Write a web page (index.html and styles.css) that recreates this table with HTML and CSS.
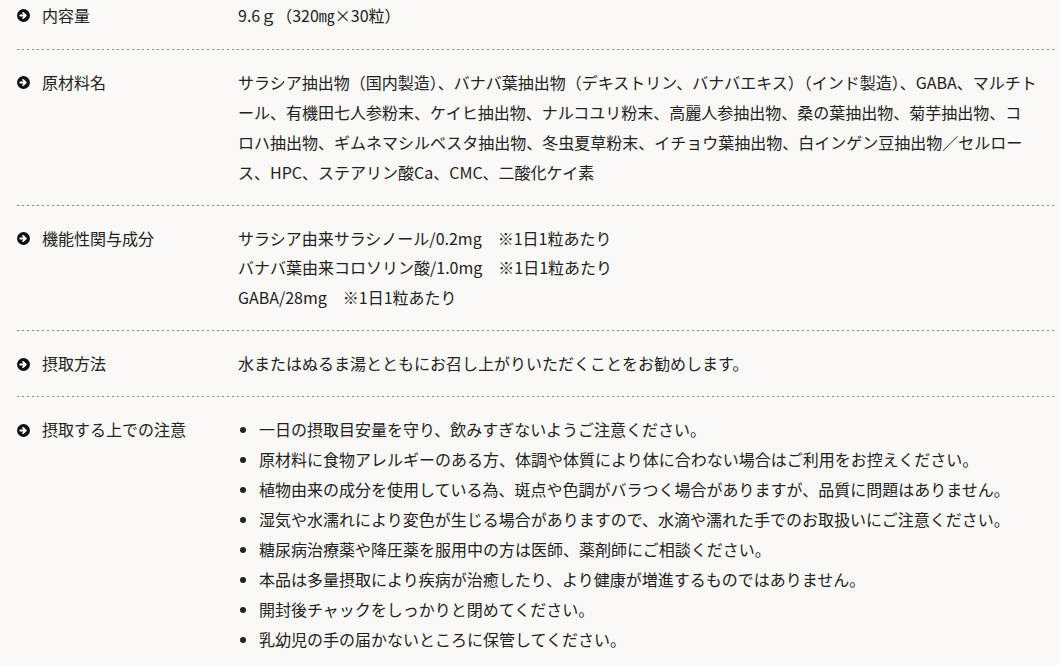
FILE: index.html
```html
<!DOCTYPE html>
<html lang="ja">
<head>
  <meta charset="UTF-8" />
  <meta name="viewport" content="width=device-width, initial-scale=1.0" />
  <title>商品詳細</title>
  <link rel="stylesheet" href="styles.css">
</head>
<body>

  <dl class="spec">
    <div class="spec-row">
      <dt>
        <svg class="ico" viewBox="0 0 16 16"><circle cx="8" cy="8" r="8" /><path d="M4 8h6.5M7.5 4.8 10.8 8 7.5 11.2" /></svg>
        内容量
      </dt>
      <dd>9.6ｇ（320㎎×30粒）</dd>
    </div>

    <div class="spec-row">
      <dt>
        <svg class="ico" viewBox="0 0 16 16"><circle cx="8" cy="8" r="8" /><path d="M4 8h6.5M7.5 4.8 10.8 8 7.5 11.2" /></svg>
        原材料名
      </dt>
      <dd class="wide">サラシア抽出物（国内製造）、バナバ葉抽出物（デキストリン、バナバエキス）（インド製造）、GABA、マルチト<br>ール、有機田七人参粉末、ケイヒ抽出物、ナルコユリ粉末、高麗人参抽出物、桑の葉抽出物、菊芋抽出物、コ<br>ロハ抽出物、ギムネマシルベスタ抽出物、冬虫夏草粉末、イチョウ葉抽出物、白インゲン豆抽出物／セルロー<br>ス、HPC、ステアリン酸Ca、CMC、二酸化ケイ素</dd>
    </div>

    <div class="spec-row">
      <dt>
        <svg class="ico" viewBox="0 0 16 16"><circle cx="8" cy="8" r="8" /><path d="M4 8h6.5M7.5 4.8 10.8 8 7.5 11.2" /></svg>
        機能性関与成分
      </dt>
      <dd>
        サラシア由来サラシノール/0.2mg　※1日1粒あたり<br>
        バナバ葉由来コロソリン酸/1.0mg　※1日1粒あたり<br>
        GABA/28mg　※1日1粒あたり
      </dd>
    </div>

    <div class="spec-row">
      <dt>
        <svg class="ico" viewBox="0 0 16 16"><circle cx="8" cy="8" r="8" /><path d="M4 8h6.5M7.5 4.8 10.8 8 7.5 11.2" /></svg>
        摂取方法
      </dt>
      <dd>水またはぬるま湯とともにお召し上がりいただくことをお勧めします。</dd>
    </div>

    <div class="spec-row">
      <dt>
        <svg class="ico" viewBox="0 0 16 16"><circle cx="8" cy="8" r="8" /><path d="M4 8h6.5M7.5 4.8 10.8 8 7.5 11.2" /></svg>
        摂取する上での注意
      </dt>
      <dd>
        <ul class="notes">
          <li>一日の摂取目安量を守り、飲みすぎないようご注意ください。</li>
          <li>原材料に食物アレルギーのある方、体調や体質により体に合わない場合はご利用をお控えください。</li>
          <li>植物由来の成分を使用している為、斑点や色調がバラつく場合がありますが、品質に問題はありません。</li>
          <li>湿気や水濡れにより変色が生じる場合がありますので、水滴や濡れた手でのお取扱いにご注意ください。</li>
          <li>糖尿病治療薬や降圧薬を服用中の方は医師、薬剤師にご相談ください。</li>
          <li>本品は多量摂取により疾病が治癒したり、より健康が増進するものではありません。</li>
          <li>開封後チャックをしっかりと閉めてください。</li>
          <li>乳幼児の手の届かないところに保管してください。</li>
        </ul>
      </dd>
    </div>
  </dl>

</body>
</html>
```

FILE: styles.css
```css
body {
  margin: 0;
  background-color: #faf9f7;
  color: #222;
  font-family: "Noto Sans CJK JP", "Noto Sans", sans-serif;
  font-size: 16px;
  line-height: 1.87;
}

.spec {
  margin: 0;
  padding: 1px 6px 0 17px;
}

.spec-row {
  display: flex;
  padding: 18px 0;
  background-image: linear-gradient(to right, #8a8a8a 2px, transparent 2px);
  background-size: 5px 1px;
  background-repeat: repeat-x;
  background-position: left bottom;
}

.spec-row:first-child {
  padding-top: 0;
  padding-bottom: 19px;
}

.spec-row:last-child {
  background-image: none;
}

.spec dt {
  width: 221px;
  flex-shrink: 0;
  display: flex;
  align-items: center;
  align-self: flex-start;
  gap: 12px;
}

.spec dd {
  flex: 1;
  margin: 0;
  padding-right: 16px;
}

/* 改行位置は原稿どおり */
.spec dd.wide {
  padding-right: 0;
  white-space: nowrap;
}

.ico {
  width: 13px;
  height: 13px;
  flex-shrink: 0;
}

.ico circle {
  fill: #111;
}

.ico path {
  fill: none;
  stroke: #fff;
  stroke-width: 2.2;
  stroke-linecap: round;
  stroke-linejoin: round;
}

.notes {
  margin: 0;
  padding-left: 21px;
}
```
